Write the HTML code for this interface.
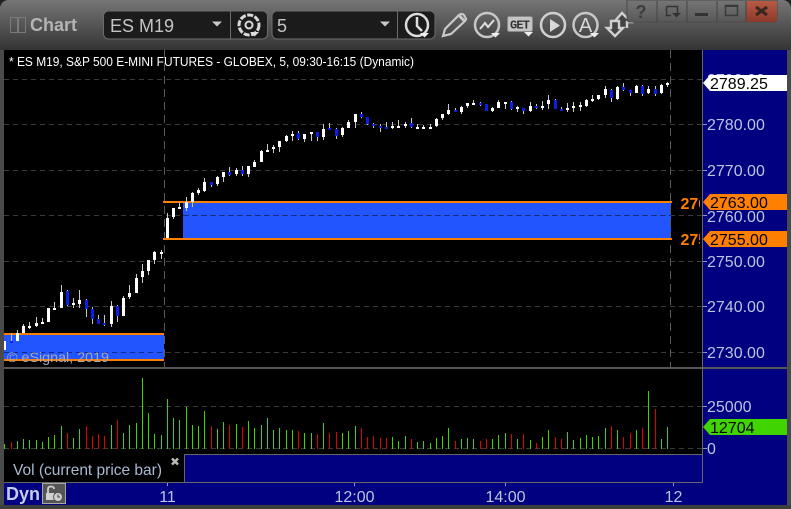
<!DOCTYPE html>
<html><head><meta charset="utf-8"><title>Chart</title>
<style>
html,body{margin:0;padding:0;background:#333;width:791px;height:509px;overflow:hidden}
svg{display:block}
text{font-family:"Liberation Sans",sans-serif}
</style></head><body>
<svg width="791" height="509" viewBox="0 0 791 509" xmlns="http://www.w3.org/2000/svg">
<defs>
<linearGradient id="tb" x1="0" y1="0" x2="0" y2="1"><stop offset="0" stop-color="#757575"/><stop offset=".5" stop-color="#555"/><stop offset="1" stop-color="#343434"/></linearGradient>
<linearGradient id="btn" x1="0" y1="0" x2="0" y2="1"><stop offset="0" stop-color="#767676"/><stop offset="1" stop-color="#585858"/></linearGradient>
<linearGradient id="cl" x1="0" y1="0" x2="0" y2="1"><stop offset="0" stop-color="#b85a45"/><stop offset="1" stop-color="#8c3a2a"/></linearGradient>
<clipPath id="lc"><rect x="640" y="50" width="60" height="300"/></clipPath>
</defs>
<rect width="791" height="509" fill="#4a4a4a"/>
<rect width="791" height="50" fill="url(#tb)"/>
<path d="M0 0H7Q2 1 0 7ZM791 0H784Q789 1 791 7Z" fill="#222"/>

<!-- toolbar -->
<rect x="10.5" y="17.5" width="7" height="15" fill="none" stroke="#7a7a7a"/>
<rect x="18.5" y="17.5" width="7" height="15" fill="none" stroke="#7a7a7a"/>
<text x="30" y="31" font-size="18" font-weight="bold" fill="#b4b4b4">Chart</text>
<rect x="103.5" y="11" width="164" height="28" rx="5" fill="#1b1b1b" stroke="#6c6c6c"/>
<path d="M230.5 11V39" stroke="#6c6c6c"/>
<text x="110" y="32" font-size="18" fill="#c4c4c4">ES M19</text>
<path d="M212 21.5h10l-5 5z" fill="#c8c8c8"/>
<circle cx="249" cy="25" r="10" fill="none" stroke="#d8d8d8" stroke-width="3" stroke-dasharray="6 1.5"/>
<circle cx="249" cy="25" r="3.5" fill="none" stroke="#d8d8d8" stroke-width="2"/>
<path d="M250 32h9l-4.500 4.500z" fill="#e0e0e0"/>
<rect x="272" y="11" width="163" height="28" rx="5" fill="#1b1b1b" stroke="#6c6c6c"/>
<text x="277" y="32" font-size="18" fill="#c4c4c4">5</text>
<path d="M380 21.500h10l-5 5z" fill="#c8c8c8"/>
<path d="M397.500 11V39" stroke="#6c6c6c"/>
<circle cx="417" cy="25" r="11" fill="none" stroke="#dcdcdc" stroke-width="2.500"/>
<path d="M417 17V26L422 31" fill="none" stroke="#dcdcdc" stroke-width="2.500"/>
<path d="M420 33h9l-4.500 4.500z" fill="#eee"/>

<path d="M443 36L445 29L459 15Q462 13 464 15L465 17Q467 19 465 21L451 34Z" fill="none" stroke="#c8c8c8" stroke-width="2.200"/>
<path d="M459 15.500L465 21.500" stroke="#c8c8c8" stroke-width="3"/>
<circle cx="487" cy="25" r="12" fill="none" stroke="#c8c8c8" stroke-width="2.500"/>
<path d="M480 29L485 23L488 27L494 20" fill="none" stroke="#e0e0e0" stroke-width="2"/>
<path d="M491 33h9l-4.500 4.500z" fill="#eee"/>
<rect x="507.500" y="16.500" width="25" height="15" rx="2" fill="#c4c4c4" stroke="#8a8a8a"/>
<text x="520" y="28.500" font-size="12" font-weight="bold" text-anchor="middle" fill="#333" style="font-family:'Liberation Mono',monospace" textLength="20">GET</text>
<path d="M524 32h9l-4.500 4.500z" fill="#eee"/>
<circle cx="553" cy="25" r="12" fill="none" stroke="#d0d0d0" stroke-width="2.500"/>
<path d="M550 19L560 25.500L550 32Z" fill="#d8d8d8"/>
<circle cx="585.500" cy="25" r="12" fill="none" stroke="#c8c8c8" stroke-width="2.500"/>
<text x="585.500" y="32" font-size="20" text-anchor="middle" fill="#d8d8d8">A</text>
<path d="M590 33h9l-4.500 4.500z" fill="#eee"/>
<path d="M618 26V22H614L622 13L631 22H627V28" fill="#444" stroke="#d0d0d0" stroke-width="2.400"/>
<path d="M607 28H611V21H619V28H623L615 36Z" fill="#444" stroke="#d0d0d0" stroke-width="2.400"/>

<!-- window buttons -->
<path d="M627 0V19Q627 22 630 22H774Q777 22 777 19V0Z" fill="url(#btn)" stroke="#4a4a4a"/>
<path d="M746 1H777V19Q777 22 774 22H746Z" fill="url(#cl)"/>
<path d="M657 1V22M687 1V22M717 1V22M746 1V22" stroke="#444"/>
<text x="641" y="18" font-size="18" font-weight="bold" text-anchor="middle" fill="#3c3c3c">?</text>
<path d="M666.500 6.500H677.500V14M666.500 6.500V15.500H671" fill="none" stroke="#333" stroke-width="1.500"/>
<path d="M672 13h9l-4.500 4.500z" fill="#333"/>
<rect x="695" y="13" width="13" height="3" fill="#333"/>
<rect x="725.500" y="5.500" width="12" height="10" fill="none" stroke="#3a3a3a" stroke-width="1.500"/>
<path d="M725 6H738" stroke="#3a3a3a" stroke-width="2"/>
<path d="M756 7L767 15M767 7L756 15" stroke="#3a2520" stroke-width="3"/>

<!-- chart panel -->
<rect x="4" y="50" width="698" height="317" fill="#000"/>
<rect x="703" y="50" width="84" height="455" fill="#000080"/>
<rect x="4" y="369" width="698" height="85" fill="#000"/>

<!-- zones -->
<rect x="4" y="334" width="160" height="26" fill="#2355ff"/>
<rect x="183" y="202" width="488" height="37" fill="#2355ff"/>

<!-- grid -->
<g stroke="#3a3a3a" stroke-dasharray="5 4" fill="none">
<path d="M4 79.500H702M4 124.500H702M4 170.500H702M4 215.500H702M4 261.500H702M4 306.500H702M4 352.500H702M4 406.500H702M4 448.500H702"/>
</g>
<path d="M164.500 50V367M670.500 50V367" stroke="#5a5a5a" stroke-dasharray="8 5" fill="none"/>
<path d="M183 215.500H671" stroke="#0f2a8a" stroke-dasharray="5 4" fill="none"/>
<path d="M4 352.500H164" stroke="#0f2a8a" stroke-dasharray="5 4" fill="none"/>

<!-- orange lines -->
<path d="M4 334H164M4 360H164M163 202H672M163 239H672" stroke="#ff8000" stroke-width="2"/>

<!-- wicks -->
<path stroke="#c8c8c8" stroke-width="1" fill="none" d="M11.500 333V343M17.500 330V341M23.500 324V333M29.500 322V329M36.500 317V327M42.500 318V324M54.500 302V310M61.500 285V308M67.500 290V306M73.500 298V308M79.500 290V308M86.500 299V317M92.500 307V324M98.500 315V324M104.500 315V326M111.500 301V327M117.500 305V322M123.500 296V316M129.500 285V299M136.500 274V293M142.500 264V283M148.500 260V275M154.500 251V264M161.500 250V259M167.500 213V238M173.500 208V219M179.500 202V209M186.500 197V211M192.500 192V207M198.500 188V195M204.500 178V192M211.500 182V187M217.500 176V186M223.500 172V182M229.500 167V176M236.500 168V176M242.500 166V176M248.500 166V177M254.500 160V167M261.500 150V162M267.500 144V152M273.500 145V153M279.500 141V152M286.500 135V142M292.500 131V141M298.500 131V140M304.500 134V142M311.500 132V141M317.500 132V141M323.500 124V140M329.500 123V130M336.500 128V139M342.500 127V137M348.500 120V128M355.500 114V128M361.500 112V118M367.500 117V125M373.500 123V128M380.500 124V132M386.500 122V129M392.500 122V129M398.500 120V128M405.500 122V128M411.500 118V128M417.500 124V129M423.500 125V129M430.500 124V129M436.500 118V127M442.500 114V120M448.500 104V115M455.500 108V112M461.500 106V114M467.500 103V108M473.500 100V105M480.500 102V106M492.500 107V112M498.500 100V108M505.500 102V109M511.500 101V110M517.500 106V112M523.500 108V114M530.500 102V112M536.500 104V109M542.500 101V110M548.500 95V109M555.500 99V109M561.500 107V111M567.500 103V112M573.500 102V112M580.500 102V111M586.500 99V107M592.500 95V102M598.500 95V100M605.500 86V98M611.500 89V102M617.500 86V100M623.500 83V91M630.500 90V96M636.500 85V93M642.500 85V96M648.500 86V94M655.500 86V96M661.500 84V94M667.500 82V87"/>
<!-- white bodies -->
<path stroke="#fff" stroke-width="3" fill="none" d="M4.500 341V350M17.500 333V341M23.500 326V333M29.500 326V328M36.500 323V326M42.500 322V324M48.500 308V322M54.500 308V310M61.500 292V308M73.500 303V305M79.500 300V304M111.500 306V324M123.500 298V316M129.500 293V297M136.500 278V293M142.500 271V277M148.500 260V271M154.500 252V260M161.500 252V254M167.500 218V238M173.500 208V217M179.500 207V209M186.500 202V208M192.500 193V202M198.500 190V193M204.500 182V191M217.500 177V184M223.500 172V177M236.500 170V174M248.500 166V174M254.500 162V167M261.500 151V162M267.500 150V152M273.500 147V149M279.500 141V147M286.500 136V141M292.500 134V136M304.500 134V139M311.500 132V134M323.500 129V137M342.500 128V135M348.500 122V128M355.500 114V122M392.500 126V128M398.500 126V128M405.500 124V126M417.500 127V129M423.500 127V129M430.500 127V129M436.500 119V126M442.500 114V118M448.500 110V114M461.500 107V112M467.500 103V106M473.500 103V105M492.500 108V111M498.500 102V108M505.500 102V104M517.500 107V109M530.500 106V111M542.500 106V108M548.500 100V104M567.500 108V110M573.500 106V108M580.500 105V107M586.500 100V106M592.500 99V101M598.500 95V99M605.500 89V95M617.500 87V99M636.500 86V93M648.500 89V93M661.500 85V93M667.500 83V85"/>
<!-- blue bodies -->
<path stroke="#0a1ee6" stroke-width="3" fill="none" d="M11.500 341V343M67.500 291V305M86.500 300V309M92.500 309V319M98.500 319V324M104.500 323V325M117.500 306V316M211.500 182V185M229.500 172V175M242.500 170V174M298.500 133V139M317.500 132V137M329.500 128V130M336.500 129V136M361.500 114V117M367.500 117V124M373.500 124V126M380.500 126V128M386.500 127V129M411.500 123V127M455.500 110V112M480.500 103V105M486.500 104V111M511.500 102V109M523.500 108V111M536.500 106V108M555.500 100V109M561.500 109V111M611.500 90V98M623.500 87V90M630.500 90V93M642.500 86V94M655.500 89V94"/>

<text x="9" y="66" font-size="12.500" fill="#fff" textLength="405" lengthAdjust="spacingAndGlyphs">* ES M19, S&amp;P 500 E-MINI FUTURES - GLOBEX, 5, 09:30-16:15 (Dynamic)</text>
<text x="7" y="362" font-size="14" fill="#a4a9b6" textLength="102" lengthAdjust="spacingAndGlyphs">© eSignal, 2019</text>

<!-- clipped orange labels -->
<g clip-path="url(#lc)" font-size="16" font-weight="bold" fill="#ff8000">
<text x="680.500" y="209">2763.00</text>
<text x="680.500" y="245">2755.00</text>
</g>

<!-- volume -->
<path stroke="#3fd400" stroke-width="1" fill="none" d="M4.500 444V449M17.500 441V449M23.500 439V449M29.500 440V449M36.500 440V449M42.500 442V449M48.500 437V449M54.500 435V449M61.500 426V449M73.500 438V449M79.500 429V449M111.500 425V449M123.500 433V449M129.500 425V449M136.500 423V449M142.500 378V449M148.500 413V449M154.500 434V449M161.500 435V449M167.500 399V449M173.500 418V449M179.500 420V449M186.500 407V449M192.500 425V449M198.500 426V449M204.500 411V449M217.500 429V449M223.500 422V449M236.500 424V449M248.500 421V449M254.500 428V449M261.500 425V449M267.500 418V449M273.500 430V449M279.500 428V449M286.500 430V449M292.500 430V449M304.500 433V449M311.500 433V449M323.500 423V449M342.500 433V449M348.500 431V449M355.500 426V449M392.500 437V449M398.500 441V449M405.500 436V449M417.500 442V449M423.500 441V449M430.500 443V449M436.500 438V449M442.500 436V449M448.500 428V449M461.500 439V449M467.500 438V449M473.500 439V449M492.500 439V449M498.500 435V449M505.500 433V449M517.500 439V449M530.500 440V449M542.500 437V449M548.500 430V449M567.500 432V449M573.500 440V449M580.500 438V449M586.500 435V449M592.500 437V449M598.500 436V449M605.500 428V449M617.500 430V449M636.500 430V449M648.500 391V449M661.500 439V449M667.500 427V449"/>
<path stroke="#e00000" stroke-width="1" fill="none" d="M11.500 442V449M67.500 433V449M86.500 426V449M92.500 436V449M98.500 434V449M104.500 436V449M117.500 420V449M211.500 426V449M229.500 425V449M242.500 427V449M298.500 431V449M317.500 434V449M329.500 433V449M336.500 432V449M361.500 428V449M367.500 437V449M373.500 436V449M380.500 438V449M386.500 438V449M411.500 439V449M455.500 441V449M480.500 441V449M486.500 439V449M511.500 434V449M523.500 434V449M536.500 443V449M555.500 437V449M561.500 439V449M611.500 426V449M623.500 437V449M630.500 433V449M642.500 428V449M655.500 409V449"/>

<!-- lower panels -->
<rect x="4" y="454" width="181" height="28" fill="#000"/>
<rect x="184" y="454.500" width="518" height="28" fill="#000080"/>
<path d="M184 454.500H702M184.500 454V482" stroke="#666" fill="none"/>
<rect x="4" y="483" width="699" height="22" fill="#000080"/>
<path d="M4 482.500H702" stroke="#666"/>
<text x="13" y="475" font-size="16" fill="#a9bad2" textLength="149" lengthAdjust="spacingAndGlyphs">Vol (current price bar)</text>
<path d="M172 458.500L178 464.500M178 458.500L172 464.500" stroke="#bbb" stroke-width="2.500"/>

<!-- separators -->
<rect x="0" y="367" width="791" height="2" fill="#555"/>
<rect x="702" y="50" width="1" height="433" fill="#666"/>
<rect x="0" y="50" width="4" height="459" fill="#4a4a4a"/>
<rect x="787" y="50" width="4" height="459" fill="#4a4a4a"/>
<rect x="0" y="505" width="791" height="4" fill="#3e3e3e"/>

<!-- y axis -->
<g stroke="#8e96b8"><path d="M703 124.500H707M703 170.500H707M703 215.500H707M703 261.500H707M703 306.500H707M703 352.500H707M703 406.500H707M703 448.500H707"/></g>
<g font-size="16" fill="#bcc4e0">
<text x="707" y="85">2790.00</text>
<text x="707" y="130">2780.00</text>
<text x="707" y="176">2770.00</text>
<text x="707" y="222">2760.00</text>
<text x="707" y="267">2750.00</text>
<text x="707" y="312">2740.00</text>
<text x="707" y="358">2730.00</text>
<text x="707" y="412">25000</text>
<text x="707" y="454">0</text>
</g>
<rect x="703" y="454" width="30" height="8" fill="#000080"/>
<path d="M703 83L710 75H787V91H710Z" fill="#fff"/>
<path d="M703 202L710 194H787V210H710Z" fill="#ff8000"/>
<path d="M703 239L710 231H787V247H710Z" fill="#ff8000"/>
<path d="M703 427L710 419H787V435H710Z" fill="#40d400"/>
<g font-size="16" fill="#000">
<text x="710" y="89">2789.25</text>
<text x="710" y="208">2763.00</text>
<text x="710" y="245">2755.00</text>
<text x="710" y="433">12704</text>
</g>

<!-- x axis -->
<path d="M167.500 483V486M354.500 483V486M505.500 483V486M673.500 483V486" stroke="#8e96b8"/>
<g font-size="16" fill="#bcc4e0" text-anchor="middle">
<text x="167.500" y="502">11</text>
<text x="354.500" y="502">12:00</text>
<text x="505.500" y="502">14:00</text>
<text x="673.500" y="502">12</text>
</g>
<text x="6" y="500" font-size="18" font-weight="bold" fill="#c4cce8">Dyn</text>
<rect x="42.500" y="483.500" width="23" height="20" fill="#555" stroke="#a8a8a8"/>
<path d="M48 497V489Q48 486.500 51 486.500Q54 486.500 54 489" fill="none" stroke="#d0d0d0" stroke-width="1.800"/>
<rect x="46" y="493" width="8" height="7" fill="#d0d0d0"/>
<circle cx="58" cy="497" r="4.500" fill="#d0d0d0" stroke="#555"/>
<path d="M58 494.500V497H60" stroke="#3c3c3c" fill="none"/>
</svg>
</body></html>
